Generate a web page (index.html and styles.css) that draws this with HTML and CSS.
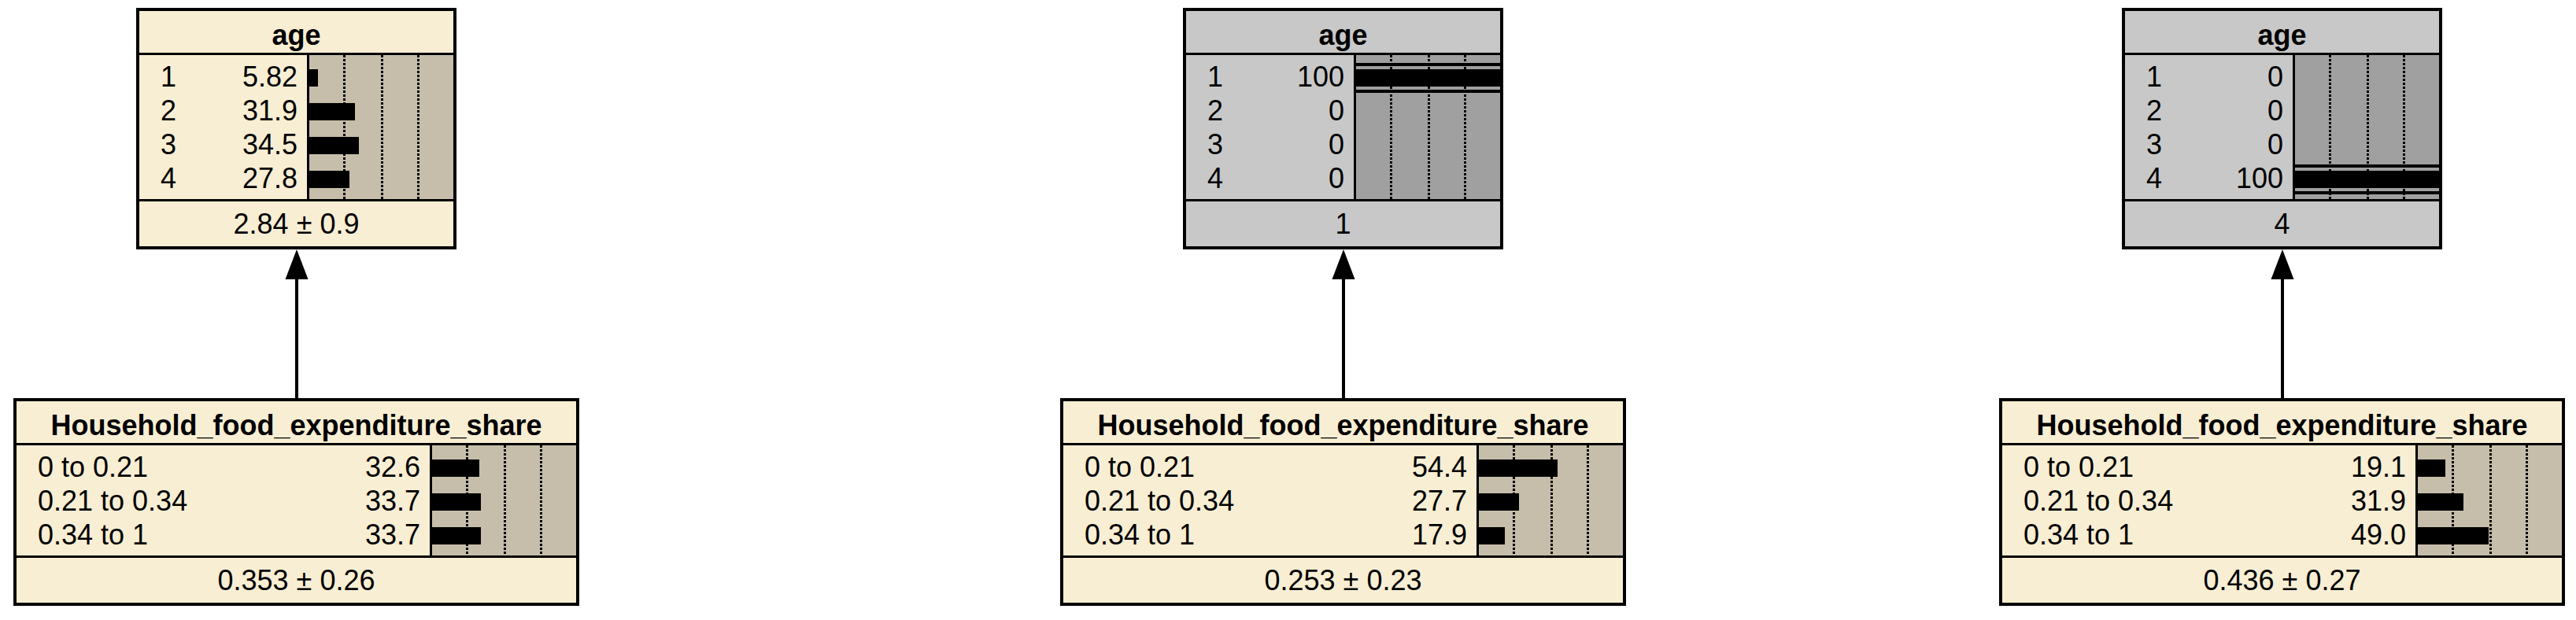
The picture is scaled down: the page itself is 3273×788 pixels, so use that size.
FILE: index.html
```html
<!DOCTYPE html>
<html lang="en">
<head>
<meta charset="utf-8">
<title>Belief network</title>
<link rel="stylesheet" href="styles.css">
</head>
<body>
<div class="canvas">

  <div class="net net-1">
    <div class="node node-narrow">
      <div class="node-title">age</div>
      <div class="node-body">
        <div class="states">
          <div class="state"><span class="state-name">1</span><span class="state-val">5.82</span></div>
          <div class="state"><span class="state-name">2</span><span class="state-val">31.9</span></div>
          <div class="state"><span class="state-name">3</span><span class="state-val">34.5</span></div>
          <div class="state"><span class="state-name">4</span><span class="state-val">27.8</span></div>
        </div>
        <div class="graph">
          <div class="bar-row"><div class="bar" style="width:5.82%"></div></div>
          <div class="bar-row"><div class="bar" style="width:31.9%"></div></div>
          <div class="bar-row"><div class="bar" style="width:34.5%"></div></div>
          <div class="bar-row"><div class="bar" style="width:27.8%"></div></div>
        </div>
      </div>
      <div class="node-foot">2.84 ± 0.9</div>
    </div>
    <svg class="link" width="30" height="189" viewBox="0 0 30 189">
      <polygon points="15,0 0.5,38 29.5,38" fill="#000"/>
      <rect x="13" y="37" width="4" height="152" fill="#000"/>
    </svg>
    <div class="node node-wide">
      <div class="node-title">Household_food_expenditure_share</div>
      <div class="node-body">
        <div class="states">
          <div class="state"><span class="state-name">0 to 0.21</span><span class="state-val">32.6</span></div>
          <div class="state"><span class="state-name">0.21 to 0.34</span><span class="state-val">33.7</span></div>
          <div class="state"><span class="state-name">0.34 to 1</span><span class="state-val">33.7</span></div>
        </div>
        <div class="graph">
          <div class="bar-row"><div class="bar" style="width:32.6%"></div></div>
          <div class="bar-row"><div class="bar" style="width:33.7%"></div></div>
          <div class="bar-row"><div class="bar" style="width:33.7%"></div></div>
        </div>
      </div>
      <div class="node-foot">0.353 ± 0.26</div>
    </div>
  </div>

  <div class="net net-2">
    <div class="node node-narrow node-evidence">
      <div class="node-title">age</div>
      <div class="node-body">
        <div class="states">
          <div class="state"><span class="state-name">1</span><span class="state-val">100</span></div>
          <div class="state"><span class="state-name">2</span><span class="state-val">0</span></div>
          <div class="state"><span class="state-name">3</span><span class="state-val">0</span></div>
          <div class="state"><span class="state-name">4</span><span class="state-val">0</span></div>
        </div>
        <div class="graph">
          <div class="bar-row bar-row-full"><div class="bar" style="width:100%"></div></div>
          <div class="bar-row"></div>
          <div class="bar-row"></div>
          <div class="bar-row"></div>
        </div>
      </div>
      <div class="node-foot">1</div>
    </div>
    <svg class="link" width="30" height="189" viewBox="0 0 30 189">
      <polygon points="15,0 0.5,38 29.5,38" fill="#000"/>
      <rect x="13" y="37" width="4" height="152" fill="#000"/>
    </svg>
    <div class="node node-wide">
      <div class="node-title">Household_food_expenditure_share</div>
      <div class="node-body">
        <div class="states">
          <div class="state"><span class="state-name">0 to 0.21</span><span class="state-val">54.4</span></div>
          <div class="state"><span class="state-name">0.21 to 0.34</span><span class="state-val">27.7</span></div>
          <div class="state"><span class="state-name">0.34 to 1</span><span class="state-val">17.9</span></div>
        </div>
        <div class="graph">
          <div class="bar-row"><div class="bar" style="width:54.4%"></div></div>
          <div class="bar-row"><div class="bar" style="width:27.7%"></div></div>
          <div class="bar-row"><div class="bar" style="width:17.9%"></div></div>
        </div>
      </div>
      <div class="node-foot">0.253 ± 0.23</div>
    </div>
  </div>

  <div class="net net-3">
    <div class="node node-narrow node-evidence">
      <div class="node-title">age</div>
      <div class="node-body">
        <div class="states">
          <div class="state"><span class="state-name">1</span><span class="state-val">0</span></div>
          <div class="state"><span class="state-name">2</span><span class="state-val">0</span></div>
          <div class="state"><span class="state-name">3</span><span class="state-val">0</span></div>
          <div class="state"><span class="state-name">4</span><span class="state-val">100</span></div>
        </div>
        <div class="graph">
          <div class="bar-row"></div>
          <div class="bar-row"></div>
          <div class="bar-row"></div>
          <div class="bar-row bar-row-full"><div class="bar" style="width:100%"></div></div>
        </div>
      </div>
      <div class="node-foot">4</div>
    </div>
    <svg class="link" width="30" height="189" viewBox="0 0 30 189">
      <polygon points="15,0 0.5,38 29.5,38" fill="#000"/>
      <rect x="13" y="37" width="4" height="152" fill="#000"/>
    </svg>
    <div class="node node-wide">
      <div class="node-title">Household_food_expenditure_share</div>
      <div class="node-body">
        <div class="states">
          <div class="state"><span class="state-name">0 to 0.21</span><span class="state-val">19.1</span></div>
          <div class="state"><span class="state-name">0.21 to 0.34</span><span class="state-val">31.9</span></div>
          <div class="state"><span class="state-name">0.34 to 1</span><span class="state-val">49.0</span></div>
        </div>
        <div class="graph">
          <div class="bar-row"><div class="bar" style="width:19.1%"></div></div>
          <div class="bar-row"><div class="bar" style="width:31.9%"></div></div>
          <div class="bar-row"><div class="bar" style="width:49.0%"></div></div>
        </div>
      </div>
      <div class="node-foot">0.436 ± 0.27</div>
    </div>
  </div>

</div>
</body>
</html>
```

FILE: styles.css
```css
html, body {
  margin: 0;
  padding: 0;
  background: #ffffff;
}

body {
  font-family: "Liberation Sans", Arial, sans-serif;
  font-size: 36px;
  color: #000000;
}

.canvas {
  position: relative;
  width: 3273px;
  height: 788px;
  overflow: hidden;
}

.net {
  position: absolute;
  top: 10px;
  width: 719px;
  display: flex;
  flex-direction: column;
  align-items: center;
}

.net-1 { left: 17px; }
.net-2 { left: 1347px; }
.net-3 { left: 2540px; }

.link {
  display: block;
  flex: none;
}

.node {
  box-sizing: border-box;
  border: 4px solid #000000;
  background: #f8eed3;
  display: flex;
  flex-direction: column;
}

.node-narrow { width: 407px; }
.node-wide { width: 719px; }

.node-title {
  height: 56px;
  box-sizing: border-box;
  padding-top: 5px;
  line-height: 51px;
  font-weight: bold;
  text-align: center;
  white-space: nowrap;
  border-bottom: 3px solid #000000;
}

.node-body {
  display: flex;
}

.states {
  flex: 1;
  padding: 6px 12px 5px 27px;
  border-right: 3px solid #000000;
}

.state {
  height: 43px;
  line-height: 43px;
  display: flex;
  justify-content: space-between;
  white-space: nowrap;
}

.graph {
  width: 183px;
  flex: none;
  padding: 6px 0 5px;
  background-color: #c6beaa;
  background-image:
    linear-gradient(#000 3px, transparent 3px),
    linear-gradient(#000 3px, transparent 3px),
    linear-gradient(#000 3px, transparent 3px);
  background-size: 3px 5px, 3px 5px, 3px 5px;
  background-repeat: repeat-y;
  background-position: 43px 0, 91px 0, 137px 0;
}

.bar-row {
  height: 43px;
  box-sizing: border-box;
  padding-top: 12px;
}

.bar {
  height: 22px;
  background: #000000;
}

.bar-row-full {
  background: linear-gradient(to bottom,
    transparent 0 4px,
    #000 4px 8px,
    transparent 8px 38px,
    #000 38px 42px,
    transparent 42px);
}

.node-foot {
  height: 57px;
  line-height: 57px;
  text-align: center;
  border-top: 3px solid #000000;
  white-space: nowrap;
}

.node-evidence {
  background: #c8c8c8;
}

.node-evidence .graph {
  background-color: #a0a0a0;
}
```
